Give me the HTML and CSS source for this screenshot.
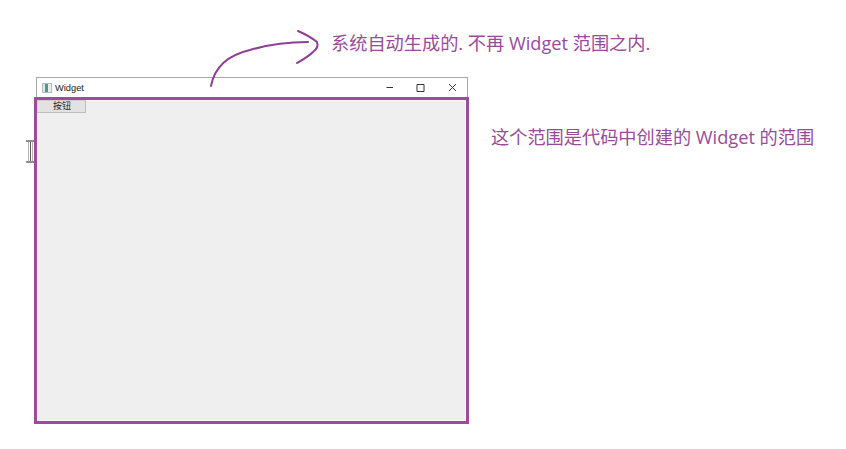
FILE: index.html
```html
<!DOCTYPE html>
<html lang="zh-CN">
<head>
  <meta charset="UTF-8" />
  <title>Widget</title>
  <link rel="stylesheet" href="styles.css">
</head>
<body>
  <div class="canvas">
    <p class="note note-top">系统自动生成的. 不再 Widget 范围之内.</p>
    <p class="note note-side">这个范围是代码中创建的 Widget 的范围</p>

    <svg class="arrow" width="140" height="75" viewBox="0 0 140 75" fill="none">
      <path d="M11 66C14 50 24 36 50 30C70 24 90 22 108 22" />
      <path d="M98 11C105 14 112 18 117 22C118.500 26 117 29 113 32C108 37 102 40 97 43" />
    </svg>

    <div class="cursor">
      <span></span>
    </div>

    <div class="window">
      <div class="titlebar">
        <span class="app-icon"></span>
        <span class="title">Widget</span>
        <div class="controls">
          <svg width="11" height="11" viewBox="0 0 11 11"><path d="M1.500 5.500H8" /></svg>
          <svg width="11" height="11" viewBox="0 0 11 11"><path d="M1 2.500H8V9.500H1Z" /></svg>
          <svg width="11" height="11" viewBox="0 0 11 11"><path d="M2 2L9 9M9 2L2 9" /></svg>
        </div>
      </div>
      <div class="client">
        <button class="push">按钮</button>
      </div>
    </div>
  </div>
</body>
</html>
```

FILE: styles.css
```css
body {
  margin: 0;
  background-color: #fff;
  font-family: "Liberation Sans", "Noto Sans CJK SC", sans-serif;
}

.canvas {
  position: relative;
  width: 846px;
  height: 449px;
  overflow: hidden;
}

.note {
  position: absolute;
  margin: 0;
  color: #9a4a9d;
  font-family: "Open Sans", "Noto Sans CJK SC", sans-serif;
  font-size: 18.2px;
  line-height: 24px;
  white-space: nowrap;
}

.note-top {
  left: 331px;
  top: 31px;
}

.note-side {
  left: 491px;
  top: 125px;
}

.arrow {
  position: absolute;
  left: 200px;
  top: 20px;
  z-index: 2;
}

.arrow path {
  stroke: #8e3f95;
  stroke-width: 2;
  stroke-linecap: round;
  stroke-linejoin: round;
}

.cursor {
  position: absolute;
  left: 26px;
  top: 140px;
  width: 9px;
  height: 23px;
  display: flex;
  justify-content: center;
  border: solid #8f8f8f;
  border-width: 2px 0;
  box-sizing: border-box;
}

.cursor span {
  width: 5px;
  border: solid #b5b5b5;
  border-width: 0 1px;
  background-color: #555;
  background-clip: content-box;
  box-sizing: border-box;
  padding: 0 1px;
}

.window {
  position: absolute;
  left: 36px;
  top: 77px;
  width: 432px;
  height: 347px;
  border: 1px solid #a8a8a8;
  border-bottom: 0;
  box-sizing: border-box;
  display: flex;
  flex-direction: column;
}

.titlebar {
  height: 19px;
  display: flex;
  align-items: center;
  padding-left: 5px;
  background-color: #fff;
}

.app-icon {
  width: 8px;
  height: 8px;
  border: 1px solid #b4bcbc;
  margin-right: 3px;
  background: linear-gradient(90deg, #dfe8e8 20%, #4d9a90 20%, #4d9a90 60%, #e8eeee 60%);
}

.title {
  font-size: 9.3px;
  color: #222;
}

.controls {
  margin-left: auto;
  margin-right: 9.500px;
  display: flex;
  gap: 20px;
}

.controls svg {
  display: block;
  fill: none;
  stroke: #333;
  stroke-width: 1;
}

.client {
  flex: 1;
  margin: 0 -2px 0 -3px;
  border: 3px solid #9d4a9f;
  background-color: #efefef;
  box-shadow: inset 0 0 0 1px #f6f6f6;
}

.push {
  display: block;
  width: 49px;
  height: 13px;
  padding: 0;
  border: 1px solid #d0d0d0;
  border-right-color: #bdbdbd;
  border-bottom-color: #bdbdbd;
  background-color: #e2e2e2;
  color: #222;
  font-size: 9px;
  line-height: 11px;
}
```
